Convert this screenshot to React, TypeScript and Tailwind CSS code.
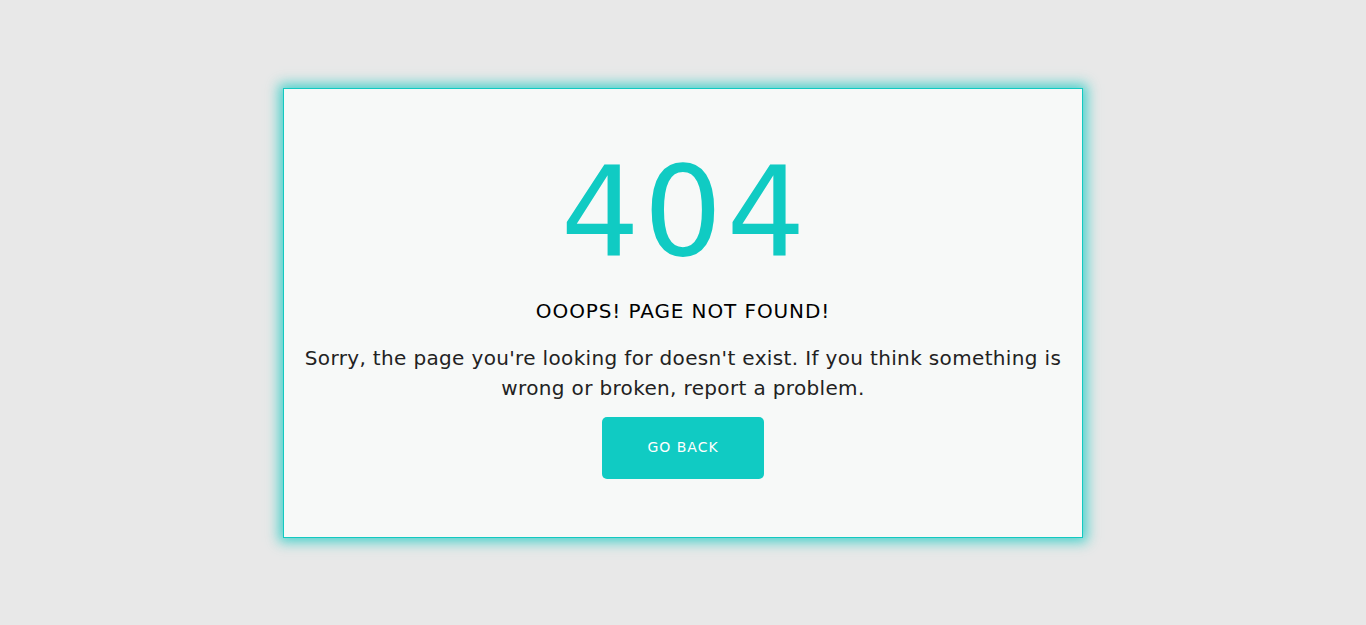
const App = () => {
  return (
    <div className="min-h-screen w-full bg-[#e8e8e8] flex items-center justify-center" style={{ fontFamily: '"DejaVu Sans", sans-serif' }}>
      <div className="w-[800px] h-[450px] bg-[#f7f9f8] border border-[#12c9c1] shadow-[0_0_12px_4px_rgba(18,201,193,0.75)] flex flex-col items-center px-[18px] pt-[56px]">
        <h1 className="text-[124px] leading-[134px] font-normal text-[#10cbc3] tracking-[4px] pl-[4px]">404</h1>
        <h2 className="mt-[20px] text-[20px] leading-6 font-medium text-black tracking-[0.9px]">OOOPS! PAGE NOT FOUND!</h2>
        <p className="mt-[20px] text-[20px] leading-[30px] text-[#222] text-center tracking-[0.35px]">
          Sorry, the page you're looking for doesn't exist. If you think something is wrong or broken, report a problem.
        </p>
        <button className="mt-[14px] w-[162px] h-[62px] rounded-[5px] bg-[#10cbc3] text-white text-[14px] tracking-[1px]">GO BACK</button>
      </div>
    </div>
  )
}

export default App
